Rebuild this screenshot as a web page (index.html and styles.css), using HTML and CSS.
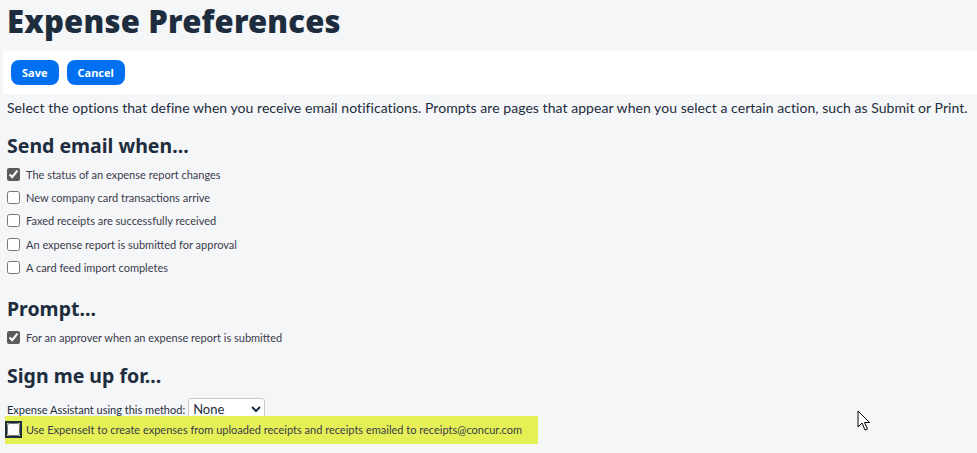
FILE: index.html
```html
<!DOCTYPE html>
<html lang="en">
<head>
    <meta charset="UTF-8">
    <title>Expense Preferences</title>
    <link rel="stylesheet" href="styles.css">
</head>
<body>

    <h1 class="page-title">Expense Preferences</h1>

    <div class="toolbar">
        <button class="btn">Save</button>
        <button class="btn">Cancel</button>
    </div>

    <p class="intro">Select the options that define when you receive email notifications. Prompts are pages that appear when you select a certain action, such as Submit or Print.</p>

    <h2 class="section-title">Send email when...</h2>
    <div class="options">
        <label class="option"><input type="checkbox" checked> The status of an expense report changes</label>
        <label class="option"><input type="checkbox"> New company card transactions arrive</label>
        <label class="option"><input type="checkbox"> Faxed receipts are successfully received</label>
        <label class="option"><input type="checkbox"> An expense report is submitted for approval</label>
        <label class="option"><input type="checkbox"> A card feed import completes</label>
    </div>

    <h2 class="section-title">Prompt...</h2>
    <div class="options options-short">
        <label class="option"><input type="checkbox" checked> For an approver when an expense report is submitted</label>
    </div>

    <h2 class="section-title">Sign me up for...</h2>
    <div class="signup">
        <label class="method">Expense Assistant using this method:
            <select>
                <option>None</option>
            </select>
        </label>
        <label class="option highlight"><input type="checkbox" class="focused"> Use ExpenseIt to create expenses from uploaded receipts and receipts emailed to receipts@concur.com</label>
    </div>

    <svg class="cursor" width="14" height="22" viewBox="0 0 14 22">
        <path d="M1 1 L1 17 L5 13 L8 20 L10.5 19 L7.5 12.5 L12.5 12.5 Z" fill="#fff" stroke="#000" stroke-width="1" stroke-linejoin="round"/>
    </svg>

</body>
</html>
```

FILE: styles.css
```css
body {
    font-family: Lato, "Noto Sans", Arial, sans-serif;
    background-color: #f5f6f7;
    color: #1d2d3e;
    margin: 0;
    padding: 0 0 0 7px;
    position: relative;
    height: 453px;
    overflow: hidden;
}
.page-title {
    font-family: "Noto Sans", Arial, sans-serif;
    font-size: 31px;
    font-weight: 900;
    margin: 0;
    height: 51px;
    line-height: 42px;
    letter-spacing: 0.2px;
}
.toolbar {
    background-color: #fff;
    margin-left: -4px;
    padding: 9px 8px;
    display: flex;
    gap: 8px;
    height: 25px;
}
.btn {
    background-color: #0070f2;
    color: #fff;
    border: none;
    border-radius: 8px;
    font-family: "Noto Sans", Arial, sans-serif;
    font-weight: 700;
    font-size: 11px;
    height: 25px;
    padding: 0 11px;
}
.intro {
    font-size: 14px;
    margin: 4px 0 0;
    line-height: 20px;
    letter-spacing: 0.05px;
    white-space: nowrap;
}
.section-title {
    font-family: "Noto Sans", Arial, sans-serif;
    font-size: 19.5px;
    font-weight: 700;
    margin: 15px 0 8px;
    line-height: 26px;
}
.options {
    display: flex;
    flex-direction: column;
    gap: 8.2px;
    padding-bottom: 6px;
}
.options-short {
    padding-bottom: 3px;
}
.option {
    display: flex;
    align-items: center;
    font-size: 11px;
    color: #3a3a4c;
    height: 15px;
}
.option input {
    margin: 0 6px 0 0;
    width: 13px;
    height: 13px;
    accent-color: #5b5b5b;
}
.signup {
    display: flex;
    flex-direction: column;
    padding-top: 1px;
}
.method {
    font-size: 11px;
    color: #1d2d3e;
    display: flex;
    align-items: center;
    gap: 3px;
}
.method select {
    font-family: inherit;
    font-size: 13px;
    width: 77px;
    height: 23px;
    border: 1px solid #c8c8c8;
    border-radius: 3px;
    background-color: #fff;
    color: #1d2d3e;
}
.highlight {
    background-color: #e5f056;
    margin: -5px 0 0 -2px;
    padding: 0 16px 0 2px;
    align-self: flex-start;
    height: 28px;
    white-space: nowrap;
}
.highlight .focused {
    outline: 2px solid #1d2d3e;
    outline-offset: 0;
}
.cursor {
    position: absolute;
    left: 857px;
    top: 410px;
}
```
